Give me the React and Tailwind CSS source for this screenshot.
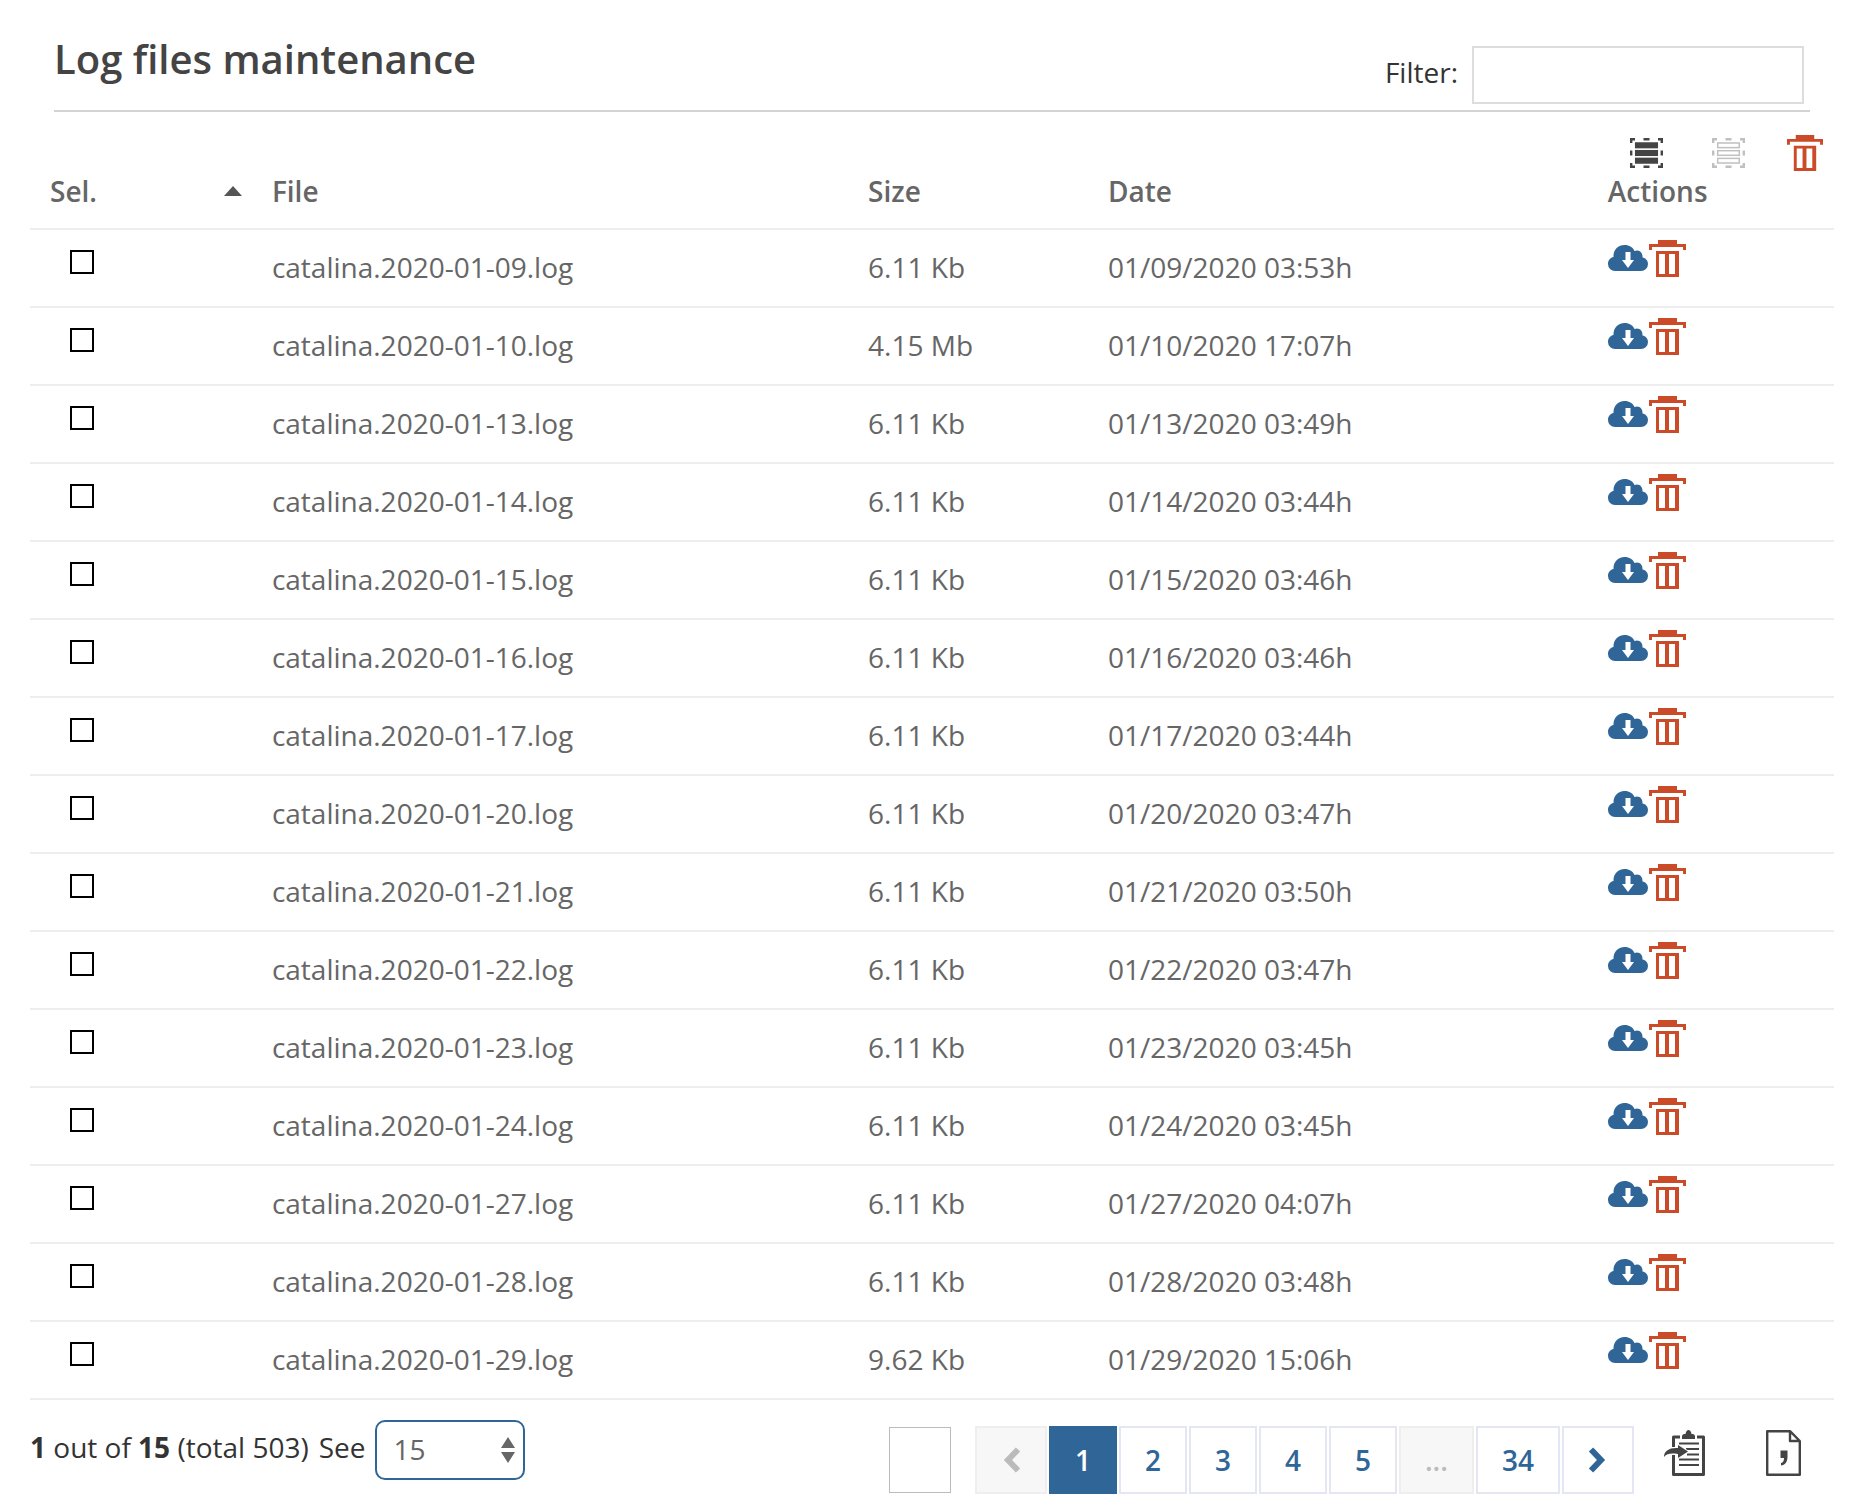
/**
 * Log files page: lists the server log files with download / delete actions.
 */
import React, { useState } from 'react';

const LOG_FILES = [
  { name: 'catalina.2020-01-09.log', size: '6.11 Kb', date: '01/09/2020 03:53h' },
  { name: 'catalina.2020-01-10.log', size: '4.15 Mb', date: '01/10/2020 17:07h' },
  { name: 'catalina.2020-01-13.log', size: '6.11 Kb', date: '01/13/2020 03:49h' },
  { name: 'catalina.2020-01-14.log', size: '6.11 Kb', date: '01/14/2020 03:44h' },
  { name: 'catalina.2020-01-15.log', size: '6.11 Kb', date: '01/15/2020 03:46h' },
  { name: 'catalina.2020-01-16.log', size: '6.11 Kb', date: '01/16/2020 03:46h' },
  { name: 'catalina.2020-01-17.log', size: '6.11 Kb', date: '01/17/2020 03:44h' },
  { name: 'catalina.2020-01-20.log', size: '6.11 Kb', date: '01/20/2020 03:47h' },
  { name: 'catalina.2020-01-21.log', size: '6.11 Kb', date: '01/21/2020 03:50h' },
  { name: 'catalina.2020-01-22.log', size: '6.11 Kb', date: '01/22/2020 03:47h' },
  { name: 'catalina.2020-01-23.log', size: '6.11 Kb', date: '01/23/2020 03:45h' },
  { name: 'catalina.2020-01-24.log', size: '6.11 Kb', date: '01/24/2020 03:45h' },
  { name: 'catalina.2020-01-27.log', size: '6.11 Kb', date: '01/27/2020 04:07h' },
  { name: 'catalina.2020-01-28.log', size: '6.11 Kb', date: '01/28/2020 03:48h' },
  { name: 'catalina.2020-01-29.log', size: '9.62 Kb', date: '01/29/2020 15:06h' },
];

const TrashIcon = ({ className }) => (
  <svg viewBox="0 0 37 37" className={className} fill="#cb4a27" aria-hidden="true">
    <path d="M9 0h19v4h9v6h-3V7H3v3H0V4h9z" />
    <path fillRule="evenodd" d="M7 11h23v26H7zM10 14v20h6V14zM20 14v20h6V14z" />
  </svg>
);

const CloudIcon = () => (
  <svg viewBox="0 0 40 28" className="h-7 w-10" aria-hidden="true">
    <path
      fill="#306597"
      d="M7 26a7 7 0 0 1-7-7c0-4 2.500-6.500 5.500-7C5 5 10 0 16.500 0c5 0 8.500 2.500 10 6 4-2 8.500 1 8 6.500 3 .5 5.500 3 5.500 6.500a7 7 0 0 1-7 7z"
    />
    <path fill="#fff" d="M17.500 7h5v8h3.500l-6 8-6-8h3.500z" />
  </svg>
);

// Dashed frame with three bars, filled or outlined
const SelectionIcon = ({ filled }) => (
  <svg viewBox="0 0 33 30" className="h-[30px] w-[33px]" fill="none" stroke={filled ? '#444' : '#c0c0c0'} aria-hidden="true">
    <path strokeWidth="2.400" d="M1.200 5V1.200H5M28 1.200h3.800V5M31.800 25v3.800H28M5 28.800H1.200V25M13.500 1.200h6M13.500 28.800h6M1.200 12.500v5M31.800 12.500v5" />
    {[5, 12.7, 20.4].map(y => (
      <rect key={y} x="5.7" y={y} width="21.600" height="4.600" strokeWidth="1.500" fill={filled ? '#444' : 'none'} />
    ))}
  </svg>
);

const ChevronIcon = ({ d }) => (
  <svg viewBox="0 0 20 26" className="h-[26px] w-5" fill="none" stroke="currentColor" strokeWidth="6" aria-hidden="true">
    <path d={d} />
  </svg>
);

const ClipboardIcon = () => (
  <svg viewBox="0 0 41 46" className="h-[46px] w-[41px]" fill="none" stroke="#444" aria-hidden="true">
    <path strokeWidth="3" strokeLinejoin="round" d="M16 7H9.500v10M9.500 25v19.500h30V7H33" />
    <path fill="#444" stroke="none" d="M18 9V6.500c0-2 1.500-2.500 3.500-2.500C22 1.500 23 0 24.500 0S27 1.500 27.500 4c2 0 3.500.5 3.500 2.500V9z" />
    <path strokeWidth="2.200" d="M15 13.500h20M22 19h13M23 24.500h12M15 29.500h20M15 35h20" />
    <path fill="#fff" stroke="#fff" strokeWidth="2" d="M14 15l10 6.500L14 28z" />
    <path fill="#444" stroke="none" d="M0 27C0 21 5 17.500 14 18v-3l10 6.500-10 6.500v-4C7 23 3 23.500 0 27z" />
  </svg>
);

const CsvIcon = () => (
  <svg viewBox="0 0 35 46" className="h-[46px] w-[35px]" aria-hidden="true">
    <path fill="none" stroke="#444" strokeWidth="2.400" strokeLinejoin="round" d="M1.200 1.200H24L33.800 11v33.800H1.200zM24 1.200V11h9.800" />
    <path fill="#444" d="M14.500 20.500h7V27c0 5-2.500 8-6.500 8.500v-2.500c2-.5 3-2 3-5h-3.500z" />
  </svg>
);

const PageBtn = ({ label, active, disabled, onClick, children }) => (
  <button
    type="button"
    aria-label={label}
    disabled={disabled}
    onClick={onClick}
    className={`flex h-[68px] items-center justify-center border-2 px-6 font-semibold ${
      active
        ? 'border-[#306597] bg-[#306597] text-white'
        : disabled
          ? 'border-[#eee] bg-[#f7f7f7] text-[#bbb]'
          : 'border-[#e4e6f3] bg-white text-[#306597]'
    }`}
  >
    {children}
  </button>
);

const App = () => {
  const [filter, setFilter] = useState('');
  const [selected, setSelected] = useState([]);
  const [page, setPage] = useState(1);
  const [pageSize, setPageSize] = useState('15');
  const [goTo, setGoTo] = useState('');

  const files = LOG_FILES.filter(f => f.name.includes(filter));

  const toggle = name => {
    setSelected(selected.includes(name) ? selected.filter(n => n !== name) : [...selected, name]);
  };

  return (
    <main className="min-h-screen bg-white pr-[26px] pl-[30px] font-['Open_Sans','Noto_Sans',sans-serif] text-[28px] leading-[38px] text-[#333]">
      <header className="mx-6 flex items-start justify-between border-b-2 border-[#d3d3d3] pt-[30px] pb-1.5">
        <h1 className="text-[40px] leading-[58px] font-semibold text-[#444]">Log files maintenance</h1>
        <div className="mt-4 mr-1.5 flex items-center gap-3.5">
          <label htmlFor="filter" className="pb-1.5">Filter:</label>
          <input
            id="filter"
            type="text"
            value={filter}
            onChange={e => setFilter(e.target.value)}
            className="h-[58px] w-[332px] border-2 border-[#ddd] px-4 outline-none"
          />
        </div>
      </header>

      <div className="flex items-center justify-end gap-[42px] pt-[23px] pr-[11px] pb-px">
        <div className="flex gap-[49px]">
          <button type="button" aria-label="Select all" onClick={() => setSelected(files.map(f => f.name))}>
            <SelectionIcon filled />
          </button>
          <button type="button" aria-label="Deselect all" onClick={() => setSelected([])}>
            <SelectionIcon />
          </button>
        </div>
        <button type="button" aria-label="Delete selected">
          <TrashIcon className="size-9" />
        </button>
      </div>

      <table className="w-full table-fixed border-collapse text-left text-[#666]">
        <thead>
          <tr className="border-b-2 border-[#eee]">
            <th className="w-[12.3%] pr-[9px] pb-[18px] pl-5 font-semibold">
              <span className="flex items-center justify-between">
                Sel.
                <svg viewBox="0 0 20 12" className="h-3 w-5" fill="#555" aria-hidden="true">
                  <path d="M10 1l9 10H1z" />
                </svg>
              </span>
            </th>
            <th className="w-[33.05%] px-5 pb-[18px] font-semibold">File</th>
            <th className="w-[13.3%] px-5 pb-[18px] font-semibold">Size</th>
            <th className="w-[27.7%] px-5 pb-[18px] font-semibold">Date</th>
            <th className="px-5 pb-[18px] font-semibold">Actions</th>
          </tr>
        </thead>
        <tbody>
          {files.map(f => (
            <tr key={f.name} className="border-b-2 border-[#eee] align-top">
              <td className="px-10 pt-5">
                <input
                  type="checkbox"
                  aria-label={f.name}
                  checked={selected.includes(f.name)}
                  onChange={() => toggle(f.name)}
                  className="block size-6 appearance-none border-2 border-black bg-white checked:bg-[#306597]"
                />
              </td>
              <td className="px-5 pt-[18px] pb-5">{f.name}</td>
              <td className="px-5 pt-[18px] pb-5">{f.size}</td>
              <td className="px-5 pt-[18px] pb-5">{f.date}</td>
              <td className="px-5 pt-2.5">
                <div className="flex items-center gap-px">
                  <button type="button" aria-label={`Download ${f.name}`}>
                    <CloudIcon />
                  </button>
                  <button type="button" aria-label={`Delete ${f.name}`}>
                    <TrashIcon className="size-[37px]" />
                  </button>
                </div>
              </td>
            </tr>
          ))}
        </tbody>
      </table>

      <footer className="flex items-start justify-between pr-[33px]">
        <div className="flex items-center gap-2.5 pt-5">
          <span className="pb-1.5">
            <b>1</b> out of <b>15</b> (total 503)
          </span>
          <label htmlFor="page-size" className="pb-1.5">See</label>
          <div className="relative">
            <select
              id="page-size"
              value={pageSize}
              onChange={e => setPageSize(e.target.value)}
              className="block h-[60px] w-[150px] appearance-none rounded-[10px] border-2 border-[#306597] bg-white px-4 pb-0.5 text-[#666] outline-none"
            >
              <option>15</option>
              <option>30</option>
              <option>50</option>
            </select>
            <svg viewBox="0 0 14 26" className="pointer-events-none absolute top-[17px] right-2.5 h-[26px] w-3.5" fill="#666" aria-hidden="true">
              <path d="M7 0l7 11H0zM0 15h14L7 26z" />
            </svg>
          </div>
        </div>

        <div className="flex items-center pt-[26px]">
          <input
            type="text"
            aria-label="Go to page"
            value={goTo}
            onChange={e => setGoTo(e.target.value)}
            className="mr-6 h-[66px] w-[62px] border border-[#bbb] text-center outline-none"
          />
          <nav className="flex gap-0.5" aria-label="Pages">
            <PageBtn label="Previous page" disabled>
              <ChevronIcon d="M17 2.500L7 13l10 10.500" />
            </PageBtn>
            {[1, 2, 3, 4, 5].map(n => (
              <PageBtn key={n} active={page === n} onClick={() => setPage(n)}>{n}</PageBtn>
            ))}
            <PageBtn disabled>...</PageBtn>
            <PageBtn active={page === 34} onClick={() => setPage(34)}>34</PageBtn>
            <PageBtn label="Next page" onClick={() => setPage(page + 1)}>
              <ChevronIcon d="M3 2.500L13 13 3 23.500" />
            </PageBtn>
          </nav>
          <div className="ml-[30px] flex gap-[61px] pb-3.5">
            <button type="button" aria-label="Copy to clipboard">
              <ClipboardIcon />
            </button>
            <button type="button" aria-label="Export CSV">
              <CsvIcon />
            </button>
          </div>
        </div>
      </footer>
    </main>
  );
};

export default App;
